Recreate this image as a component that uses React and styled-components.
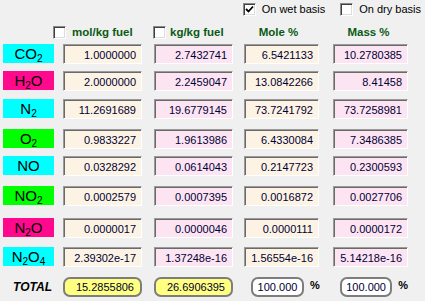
import React from "react";
import styled, { createGlobalStyle } from "styled-components";

const GlobalStyle = createGlobalStyle`
  html, body { margin: 0; padding: 0; background: #f0f0f0; }
  body { font-family: "Liberation Sans", Arial, sans-serif; }
`;

const Window = styled.div`
  width: 425px;
  height: 301px;
  background: #f0f0f0;
  overflow: hidden;
`;

const BasisBar = styled.div`
  display: flex;
  justify-content: flex-end;
  gap: 15px;
  padding: 3px 4px 0 0;
  height: 13px;
`;

const CheckLabel = styled.label`
  display: flex;
  align-items: center;
  gap: ${(p) => p.$gap || 6}px;
  font-size: ${(p) => (p.$bold ? 11.5 : 11)}px;
  font-weight: ${(p) => (p.$bold ? 700 : 400)};
  color: ${(p) => (p.$bold ? "#0a5a14" : "#000")};
  line-height: 13px;
  white-space: nowrap;
  margin-left: ${(p) => p.$shift || 0}px;
`;

const Box = styled.span`
  box-sizing: border-box;
  width: 13px;
  height: 13px;
  flex: none;
  background: #fff;
  border: 1px solid;
  border-color: #8a8a8a #ffffff #ffffff #8a8a8a;
  box-shadow: inset 1px 1px 0 #3f3f3f, inset -1px -1px 0 #dcdcdc;
  display: flex;
  align-items: center;
  justify-content: center;
`;

const Table = styled.div`
  display: flex;
  flex-direction: column;
`;

const Row = styled.div`
  display: grid;
  grid-template-columns: 60px 91px 90px 89px 75px;
  padding-left: 3px;
  align-items: start;
  margin-top: ${(p) => p.$top}px;
  height: ${(p) => p.$h || 20}px;
`;

const HeadText = styled.div`
  font-size: 11.5px;
  font-weight: 700;
  color: #0a5a14;
  line-height: 13px;
  width: 75px;
  text-align: center;
  margin-left: ${(p) => p.$shift || 0}px;
`;

const Species = styled.div`
  width: 51px;
  height: 19px;
  background: ${(p) => p.$bg};
  color: #000;
  font-size: 15px;
  line-height: 19px;
  text-align: center;
  sub {
    font-size: 10px;
    vertical-align: -3px;
    line-height: 0;
  }
`;

const Field = styled.div`
  box-sizing: border-box;
  width: ${(p) => p.$w}px;
  height: 20px;
  background: ${(p) => p.$bg};
  border: 1px solid;
  border-color: #9a9a9a #ffffff #ffffff #9a9a9a;
  box-shadow: inset 1px 1px 0 #6a6a6a;
  padding: 1px 5px 0 0;
  text-align: right;
  font-size: 11px;
  line-height: 18px;
  color: #000033;
`;

const TotalLabel = styled.div`
  font-size: 12px;
  font-weight: 700;
  font-style: italic;
  color: #000;
  text-align: right;
  padding-right: 11px;
  line-height: 20px;
`;

const Pill = styled.div`
  box-sizing: border-box;
  width: ${(p) => p.$w}px;
  height: 20px;
  border: 2px solid #7d7d7d;
  border-radius: 7px;
  background: ${(p) => p.$bg};
  font-size: 11px;
  line-height: 17px;
  color: #000033;
  text-align: ${(p) => (p.$center ? "center" : "right")};
  padding-right: ${(p) => (p.$center ? 0 : 6)}px;
  margin-left: ${(p) => p.$shift || 0}px;
`;

const PercentCell = styled.div`
  display: flex;
  align-items: flex-start;
  gap: 6px;
`;

const Percent = styled.span`
  font-size: 11px;
  font-weight: 700;
  line-height: 11px;
  margin-top: 3px;
  color: #000;
`;

const PEACH = "#fdf3e4";
const PINK = "#fde4f3";
const CYAN = "#00ffff";
const MAGENTA = "#ff0a8c";
const GREEN = "#00ff00";

const rows = [
  { label: ["CO", "2"], bg: CYAN, v: ["1.0000000", "2.7432741", "6.5421133", "10.2780385"], top: 5 },
  { label: ["H", "2", "O"], bg: MAGENTA, v: ["2.0000000", "2.2459047", "13.0842266", "8.41458"], top: 7 },
  { label: ["N", "2"], bg: CYAN, v: ["11.2691689", "19.6779145", "73.7241792", "73.7258981"], top: 8 },
  { label: ["O", "2"], bg: GREEN, v: ["0.9833227", "1.9613986", "6.4330084", "7.3486385"], top: 10 },
  { label: ["NO"], bg: CYAN, v: ["0.0328292", "0.0614043", "0.2147723", "0.2300593"], top: 7 },
  { label: ["NO", "2"], bg: GREEN, v: ["0.0002579", "0.0007395", "0.0016872", "0.0027706"], top: 10 },
  { label: ["N", "2", "O"], bg: MAGENTA, v: ["0.0000017", "0.0000046", "0.0000111", "0.0000172"], top: 12 },
  { label: ["N", "2", "O", "4"], bg: CYAN, v: ["2.39302e-17", "1.37248e-16", "1.56554e-16", "5.14218e-16"], top: 9 },
];

const widths = [79, 79, 75, 75];
const fills = [PEACH, PINK, PEACH, PINK];

function Check({ checked }) {
  return (
    <Box>
      {checked && (
        <svg width="9" height="9" viewBox="0 0 9 9">
          <path d="M1 4 L3.5 6.5 L8 1.5" fill="none" stroke="#000" strokeWidth="1.8" />
        </svg>
      )}
    </Box>
  );
}

function Formula({ parts }) {
  return parts.map((p, i) => (i % 2 === 1 ? <sub key={i}>{p}</sub> : <span key={i}>{p}</span>));
}

export default function App() {
  return (
    <Window>
      <GlobalStyle />
      <BasisBar>
        <CheckLabel>
          <Check checked />
          On wet basis
        </CheckLabel>
        <CheckLabel>
          <Check />
          On dry basis
        </CheckLabel>
      </BasisBar>
      <Table>
        <Row $top={10} $h={13}>
          <div />
          <CheckLabel $bold $shift={-10}>
            <Check />
            mol/kg fuel
          </CheckLabel>
          <CheckLabel $bold $shift={-1} $gap={4}>
            <Check />
            kg/kg fuel
          </CheckLabel>
          <HeadText $shift={-3}>Mole %</HeadText>
          <HeadText $shift={-2}>Mass %</HeadText>
        </Row>
        {rows.map((r, i) => (
          <Row key={i} $top={r.top}>
            <Species $bg={r.bg}>
              <Formula parts={r.label} />
            </Species>
            {r.v.map((val, j) => (
              <Field key={j} $w={widths[j]} $bg={fills[j]}>
                {val}
              </Field>
            ))}
          </Row>
        ))}
        <Row $top={10}>
          <TotalLabel>TOTAL</TotalLabel>
          <Pill $w={79} $bg="#ffff80">15.2855806</Pill>
          <Pill $w={79} $bg="#ffff80">26.6906395</Pill>
          <PercentCell>
            <Pill $w={53} $bg="#fff" $center $shift={7}>100.000</Pill>
            <Percent>%</Percent>
          </PercentCell>
          <PercentCell>
            <Pill $w={53} $bg="#fff" $center $shift={7}>100.000</Pill>
            <Percent>%</Percent>
          </PercentCell>
        </Row>
      </Table>
    </Window>
  );
}
